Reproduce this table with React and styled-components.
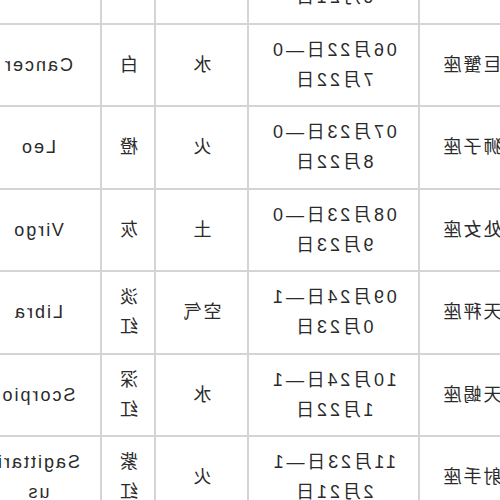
import styled, { createGlobalStyle } from "styled-components";

const GlobalStyle = createGlobalStyle`
  html, body {
    margin: 0;
    padding: 0;
    background: #fff;
  }
`;

const rows = [
  { name: "双子座", date: "05月21日—06月21日", element: "空气", color: "黄", en: "Gemini" },
  { name: "巨蟹座", date: "06月22日—07月22日", element: "水", color: "白", en: "Cancer" },
  { name: "狮子座", date: "07月23日—08月22日", element: "火", color: "橙", en: "Leo" },
  { name: "处女座", date: "08月23日—09月23日", element: "土", color: "灰", en: "Virgo" },
  { name: "天秤座", date: "09月24日—10月23日", element: "空气", color: "淡红", en: "Libra" },
  { name: "天蝎座", date: "10月24日—11月22日", element: "水", color: "深红", en: "Scorpio" },
  { name: "射手座", date: "11月23日—12月21日", element: "火", color: "紫红", en: "Sagittarius" },
];

const columns = [
  { key: "name", width: 105, pad: 12 },
  { key: "date", width: 171, pad: 20 },
  { key: "element", width: 93, pad: 12 },
  { key: "color", width: 54, pad: 8 },
  { key: "en", width: 126, pad: 18 },
];

const App = () => (
  <>
    <GlobalStyle />
    <Page>
      <Table>
        <colgroup>
          {columns.map((c) => (
            <col key={c.key} style={{ width: c.width }} />
          ))}
        </colgroup>
        <tbody>
          {rows.map((r) => (
            <Row key={r.en}>
              {columns.map((c) => (
                <Cell key={c.key} $pad={c.pad} $wide={c.key === "date"}>
                  {r[c.key]}
                </Cell>
              ))}
            </Row>
          ))}
        </tbody>
      </Table>
    </Page>
  </>
);

export default App;

const Page = styled.div`
  width: 500px;
  height: 500px;
  overflow: hidden;
  transform: scaleX(-1);
  background: #fff;
`;

const Table = styled.table`
  table-layout: fixed;
  width: 549px;
  margin: -60px 0 0 -25px;
  border-collapse: collapse;
  font-family: "Liberation Sans", "Noto Sans CJK SC", sans-serif;
  font-size: 18px;
  letter-spacing: 2px;
  color: #2a2a2a;
`;

const Row = styled.tr`
  height: 82.5px;
`;

const Cell = styled.td`
  border: 2px solid #d4d4d4;
  padding: 0 ${({ $pad }) => $pad}px;
  text-align: center;
  vertical-align: middle;
  line-height: 30px;
  word-break: break-all;
  letter-spacing: ${({ $wide }) => ($wide ? "2.8px" : "2px")};
`;
